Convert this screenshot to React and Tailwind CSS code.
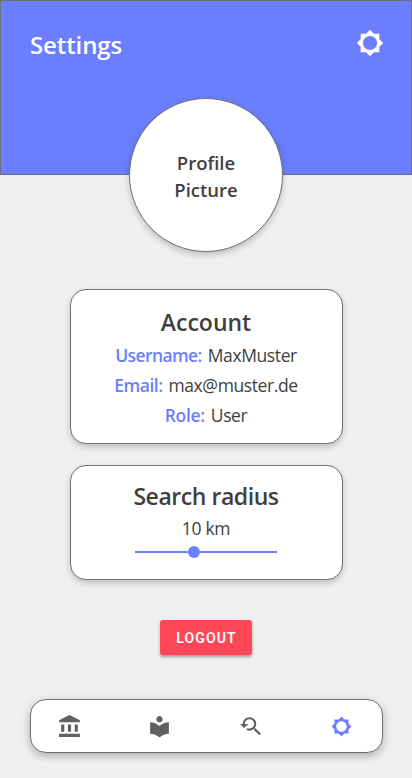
import React from "react";
import {
  MdAccountBalance,
  MdBrightness5,
  MdLocalLibrary,
  MdYoutubeSearchedFor,
} from "react-icons/md";

function Card({ className, children }) {
  return (
    <section
      className={`w-[273px] rounded-[16px] border border-[#707070] bg-white text-center shadow-[0_3px_6px_rgba(0,0,0,0.2)] ${className}`}
    >
      {children}
    </section>
  );
}

function Field({ label, value, labelClass }) {
  return (
    <p className="flex h-[30px] items-center justify-center text-[17.5px] leading-[30px]">
      <span className={`font-semibold text-[#6b7eff] ${labelClass}`}>{label}:</span>
      <span className="ml-[6px] tracking-[-0.4px]">{value}</span>
    </p>
  );
}

export default function App() {
  return (
    <div className="flex h-[778px] w-[412px] flex-col items-center overflow-hidden bg-[#efefef] font-['Open_Sans','Noto_Sans',sans-serif] text-[#3f3f3f]">
      <header className="flex h-[175px] w-full shrink-0 items-start justify-between border border-[#707070] bg-[#6b7eff] pr-[27px] pl-[29px] text-white">
        <h1 className="mt-[24px] text-[24px] leading-[40px] font-semibold tracking-[-0.1px]">Settings</h1>
        <MdBrightness5 className="mt-[28px] size-[28px]" />
      </header>

      <div className="-mt-[77px] flex size-[154px] shrink-0 items-center justify-center rounded-full border border-[#707070] bg-white pt-[1px] text-center text-[18.5px] leading-[27px] font-semibold shadow-[0_3px_6px_rgba(0,0,0,0.2)]">
        <p>
          Profile
          <br />
          Picture
        </p>
      </div>

      <main className="mt-[37px] flex flex-col items-center">
        <Card className="h-[155px] pt-[16px]">
          <h2 className="mb-[2px] text-[23px] leading-[32px] font-semibold">Account</h2>
          <Field label="Username" value="MaxMuster" labelClass="tracking-[-0.6px]" />
          <Field label="Email" value="max@muster.de" labelClass="tracking-[-0.5px]" />
          <Field label="Role" value="User" labelClass="tracking-[-0.3px]" />
        </Card>

        <Card className="mt-[21px] flex h-[115px] flex-col items-center pt-[14px]">
          <h2 className="text-[23px] leading-[32px] font-semibold tracking-[-0.45px]">Search radius</h2>
          <p className="mt-[1px] text-[17.5px] leading-[30px] tracking-[-0.3px]">10 km</p>
          <div className="mt-[3px] flex h-[12px] w-[142px] items-center">
            <span className="h-[2px] w-[53px] bg-[#6b7eff]" />
            <span className="size-[12px] rounded-full bg-[#6b7eff]" />
            <span className="h-[2px] grow bg-[#6b7eff]" />
          </div>
        </Card>

        <button className="mt-[40px] mb-[1px] h-[35px] w-[92px] rounded-[3px] bg-[#ff4757] pt-[2px] pl-[1px] font-['Roboto',sans-serif] text-[14px] font-semibold tracking-[1.15px] text-white shadow-[0_2px_3px_rgba(0,0,0,0.35)]">
          LOGOUT
        </button>
      </main>

      <nav className="mt-[43px] flex h-[54px] w-[353px] items-center rounded-[16px] border border-[#707070] bg-white pl-[26px] text-[#606060] shadow-[0_3px_8px_rgba(0,0,0,0.28)]">
        <MdAccountBalance className="size-[25px]" />
        <MdLocalLibrary className="ml-[65px] size-[25px]" />
        <MdYoutubeSearchedFor className="ml-[66px] size-[25px]" />
        <MdBrightness5 className="ml-[68px] size-[21px] text-[#6b7eff]" />
      </nav>
    </div>
  );
}
